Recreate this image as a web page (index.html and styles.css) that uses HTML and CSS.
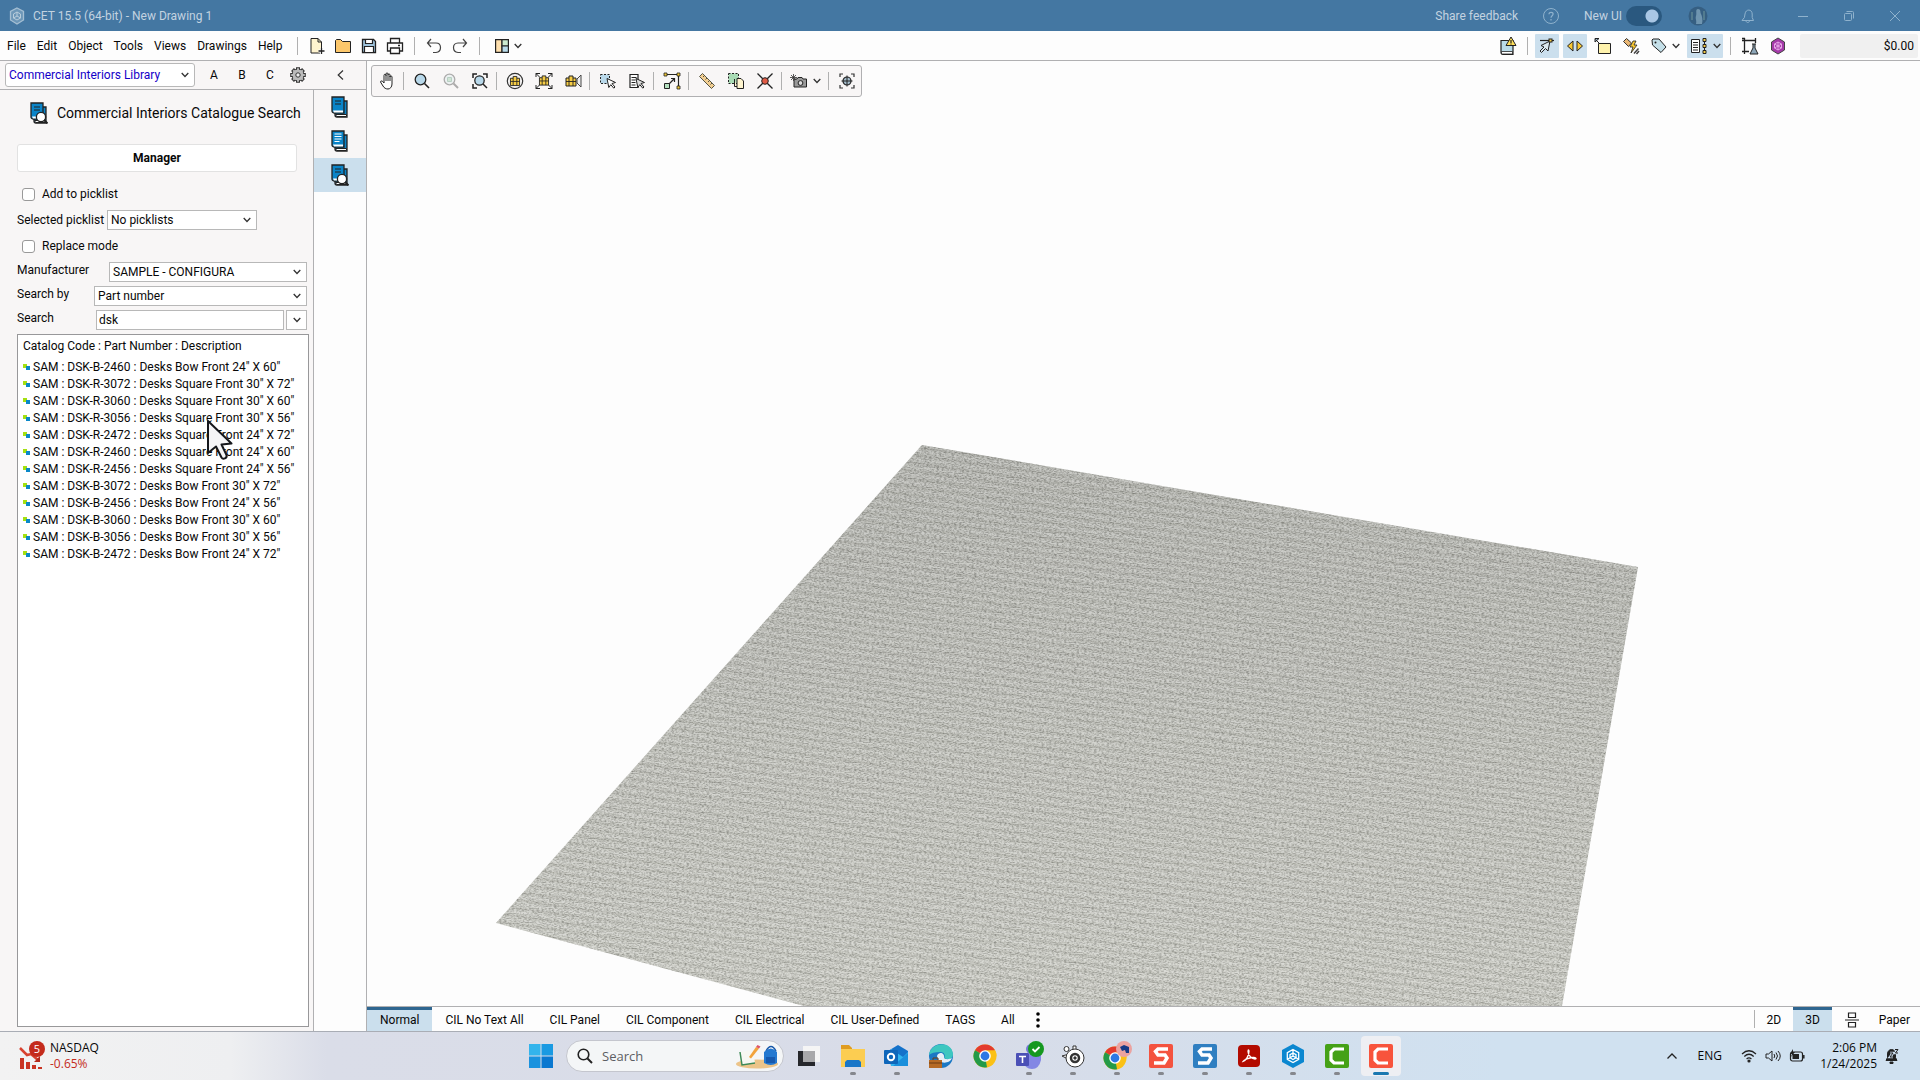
FILE: index.html
```html
<!DOCTYPE html>
<html lang="en">
<head>
<meta charset="utf-8">
<title>CET 15.5 (64-bit) - New Drawing 1</title>
<link rel="stylesheet" href="styles.css">
</head>
<body>
<svg class="defs" aria-hidden="true">
  <symbol id="book" viewBox="0 0 18 22"><path d="M4 5h12v16H6a2 2 0 0 1-2-2z" fill="#0a84c8" stroke="#222" stroke-width="1.3"/><path d="M4.500 18.500h11v2h-10z" fill="#fff" stroke="#222"/><path d="M1 1h12v16H3a2 2 0 0 1-2-2z" fill="#0a84c8" stroke="#222" stroke-width="1.300"/><path d="M2 14.500h10v2H3z" fill="#fff"/></symbol>
  <symbol id="glass" viewBox="0 0 18 22"><circle cx="11" cy="15" r="4.600" fill="#fff" stroke="#222" stroke-width="1.300"/><path d="M14 18l3.500 3.500" stroke="#222" stroke-width="2"/></symbol>
  <symbol id="chev" viewBox="0 0 8 6"><path d="M.7 1l3.300 3.500L7.300 1" fill="none" stroke="#333" stroke-width="1.300"/></symbol>
  <symbol id="part" viewBox="0 0 8 8"><path d="M0 1h4v4H0z" fill="#a5e010" shape-rendering="crispEdges"/><path d="M3 3h4v4H3z" fill="#0a88c8" shape-rendering="crispEdges"/></symbol>
  <symbol id="chrome" viewBox="0 0 24 24"><circle cx="12" cy="12" r="11.500" fill="#fbc116"/><path d="M12 12L2 6.300A11.500 11.500 0 0 1 22 6.300z" fill="#e33b2e"/><path d="M12 12l2 11.300A11.500 11.500 0 0 1 2 6.300z" fill="#239a48"/><path d="M22 6.300H12v6h11.500a11.500 11.500 0 0 0-1.500-6z" fill="#fbc116"/><circle cx="12" cy="12" r="5.800" fill="#fff"/><circle cx="12" cy="12" r="4.400" fill="#2d78e4"/></symbol>
  <symbol id="cube" viewBox="0 0 24 24"><path d="M12 5.500l5.700 3.200v6.600L12 18.500l-5.700-3.200V8.700zM12 5.500V12m0 0l5.700 3.300M12 12l-5.700 3.300M12 9l-3 1.700v3L12 15.500l3-1.800v-3z" fill="none" stroke="currentColor" stroke-width="1.300"/></symbol>
  <symbol id="cabinet" viewBox="0 0 12 12"><path d="M1 3h3V1h4v2h3v8H1z" fill="#f7cd45" stroke="#222"/><path d="M4 3v8M8 3v8M1 6.500h10" stroke="#222" stroke-width=".9"/></symbol>
</svg>

<header class="titlebar">
  <svg class="app-logo" width="16" height="18" viewBox="0 0 16 18"><path d="M8 1l6.500 3.500v8.500L8 17l-6.500-4V4.500z" fill="#6d97b8" stroke="#a5bfd3" stroke-width="1.300"/><path d="M8 5l3.500 2v4L8 13l-3.500-2V7zM8 5v4m0 0l3.500 2M8 9l-3.500 2" fill="none" stroke="#b8ccdb"/></svg>
  <span class="app-title">CET 15.5 (64-bit) - New Drawing 1</span>
  <button class="feedback">Share feedback</button>
  <button class="t-help" aria-label="Help"><svg width="16" height="16" viewBox="0 0 16 16" fill="none" stroke="#8fb2cd"><circle cx="8" cy="8" r="7.500"/><path d="M6 6.300c0-2.800 4.100-2.500 4.100-.2C10.100 7.800 8 7.800 8 9.800M8 11v1.500" stroke-width="1.200"/></svg></button>
  <label class="newui">New UI <input type="checkbox" role="switch" checked></label>
  <button class="t-avatar" aria-label="Account"><svg width="20" height="20" viewBox="0 0 20 20"><circle cx="10" cy="10" r="9.500" fill="#365f82"/><path d="M10 3c3 0 2 3 3 5s2 6 1 10H8c1-4-1-5 0-8s-1-7 2-7z" fill="#6f95b0"/><path d="M4 6v8M16 5v9" stroke="#527b8f" stroke-width="2"/></svg></button>
  <button class="t-bell" aria-label="Notifications"><svg width="14" height="16" viewBox="0 0 14 16" fill="none" stroke="#8fb2cd"><path d="M1 12.500h11.500l-1.300-3V6c0-5-6.500-5.500-7.200 0l-.6 3.500zM5 13c.5 2 3 2 3.500 0"/></svg></button>
  <button class="t-win" aria-label="Minimize"><svg width="12" height="12" viewBox="0 0 12 12" stroke="#8fb2cd"><path d="M1 6.500h10"/></svg></button>
  <button class="t-win" aria-label="Restore"><svg width="12" height="12" viewBox="0 0 12 12" fill="none" stroke="#8fb2cd"><rect x="1.500" y="3.500" width="7" height="7" rx="1"/><path d="M3.500 1.500h6a1 1 0 0 1 1 1v6"/></svg></button>
  <button class="t-win" aria-label="Close"><svg width="12" height="12" viewBox="0 0 12 12" stroke="#8fb2cd"><path d="M1 1l10 10M11 1L1 11"/></svg></button>
</header>

<div class="menubar">
  <nav class="menu">
    <button>File</button><button>Edit</button><button>Object</button><button>Tools</button><button>Views</button><button>Drawings</button><button>Help</button>
  </nav>
  <span class="sep"></span>
  <div class="tools">
    <button aria-label="New"><svg width="16" height="18" viewBox="0 0 16 18"><path d="M2 1.500h7l3.500 3.500v11H2z" fill="#fff4cf" stroke="#222"/><path d="M9 1.500V5h3.500" fill="none" stroke="#222"/><path d="M12.500 11v6M9.500 14h6" stroke="#fff" stroke-width="3"/><path d="M12.500 11v6M9.500 14h6" stroke="#222" stroke-width="1.300"/></svg></button>
    <button aria-label="Open"><svg width="18" height="16" viewBox="0 0 18 16"><path d="M1.500 2.500l1-1h4l2 2h8v11h-15z" fill="#fcc76b" stroke="#222"/></svg></button>
    <button aria-label="Save"><svg width="16" height="16" viewBox="0 0 16 16"><path d="M1.500 1.500h11l2 2v11h-13z" fill="#9ec3dc" stroke="#222" stroke-width="1.300"/><path d="M4.500 1.500h7v4h-7zM3.500 8.500h9v6h-9z" fill="#fff" stroke="#222" stroke-width="1.200"/></svg></button>
    <button aria-label="Print"><svg width="18" height="18" viewBox="0 0 18 18" fill="#fff" stroke="#222" stroke-width="1.300"><path d="M4.500 6V1.500h9V6"/><path d="M1.500 6h15v8h-15z"/><path d="M4.500 11h9v5.500h-9zM12 8.500h2"/></svg></button>
  </div>
  <span class="sep"></span>
  <div class="tools">
    <button aria-label="Undo"><svg width="16" height="16" viewBox="0 0 16 16" fill="none" stroke="#444" stroke-width="1.200"><path d="M5 1L1.500 5 5 9M2 5h8c6 0 6 9 0 9.500H7"/></svg></button>
    <button aria-label="Redo"><svg width="16" height="16" viewBox="0 0 16 16" fill="none" stroke="#444" stroke-width="1.200"><path d="M11 1l3.500 4L11 9M14 5H6c-6 0-6 9 0 9.500h3"/></svg></button>
  </div>
  <span class="sep"></span>
  <button class="wide" aria-label="Layout"><svg width="14" height="14" viewBox="0 0 14 14" stroke="#222" stroke-width="1.200"><path d="M.6.6h6.400v12.800H.6z" fill="#ffe0ae"/><path d="M7 .6h6.400V7H7z" fill="#cdebd0"/><path d="M7 7h6.400v6.400H7z" fill="#b9dceb"/></svg><svg width="8" height="6"><use href="#chev"/></svg></button>

  <div class="rtools">
    <button aria-label="Alerts"><svg width="18" height="20" viewBox="0 0 18 20"><path d="M2 4.500h12v14H4a2 2 0 0 1-2-2z" fill="#b9dbe9" stroke="#222" stroke-width="1.200"/><path d="M2.500 15.500h11v2.500h-11z" fill="#fff" stroke="#222" stroke-width=".8"/><path d="M12 1l5 8.500H7z" fill="#ffe05a" stroke="#222"/><path d="M12 4v3M12 7.600v1" stroke="#222" stroke-width="1.200"/></svg></button>
    <span class="sep"></span>
    <button class="on" aria-label="Snap"><svg width="16" height="16" viewBox="0 0 16 16" fill="#dbe8ef" stroke="#222"><path d="M1 2.500h14" stroke-width="1.200"/><path d="M11 3L2 7.500l3 1.500-4 4 1.500 1.500 4-4L9 13z"/><rect x="10" y="1" width="3" height="3" fill="#f7cd45"/></svg></button>
    <button class="on" aria-label="Flip"><svg width="18" height="12" viewBox="0 0 18 12" fill="#f9c833" stroke="#222"><path d="M7 1v10L1.500 6zM11 1v10l5.500-5z"/></svg></button>
    <button aria-label="Note"><svg width="18" height="18" viewBox="0 0 18 18"><path d="M4.500 6.500h12v10h-12z" fill="#fff3ad" stroke="#222"/><path d="M1.500 2.500L6 7M1 5V1.500h4z" fill="#9bbad0" stroke="#222"/></svg></button>
    <button aria-label="Connect"><svg width="18" height="18" viewBox="0 0 18 18"><path d="M1.500 4.500l3-3 5 4.500-3 3.500z" fill="#e9b774" stroke="#333"/><path d="M11 4l-3 6h3l-2 6 6-8h-3l2-4z" fill="#f9c833" stroke="#222" stroke-width=".8"/><path d="M12 16.500l4.500-5M14.500 17l2.500-3" stroke="#444" stroke-width="1.500"/></svg></button>
    <button class="wide" aria-label="Tags"><svg width="16" height="16" viewBox="0 0 16 16"><path d="M1 2l1-1h6l7 8-5 5.500L1.500 7z" fill="#c4dfe8" stroke="#222"/><circle cx="4.500" cy="4.500" r="1" fill="#222"/></svg><svg width="8" height="6"><use href="#chev"/></svg></button>
    <button class="wide on" aria-label="Lists"><svg width="18" height="16" viewBox="0 0 18 16"><path d="M1.500 1.500h8v13h-8z" fill="#fff" stroke="#222"/><path d="M3 4.500h5M3 7h5M3 9.500h5M3 12h5" stroke="#222" stroke-width="1.200"/><path d="M14.500 1v14" stroke="#222"/><path d="M13 .5h3v3h-3zM13 6.500h3v3h-3zM13 12.500h3v3h-3z" fill="#f7cd45" stroke="#222"/></svg><svg width="8" height="6"><use href="#chev"/></svg></button>
    <span class="sep"></span>
    <button aria-label="Lab"><svg width="18" height="18" viewBox="0 0 18 18" fill="none" stroke="#222"><path d="M3.500 1v16M1 3.500h14M1 14.500h7M1 1.500h3M14.500 1v5" stroke-width="1.300"/><path d="M11 7h4M12 7v4l-3 6h8l-3-6V7" fill="#8ca6b8"/></svg></button>
    <button aria-label="Hexagon"><svg width="16" height="18" viewBox="0 0 16 18"><path d="M8 1l6.500 4v8L8 17l-6.500-4V5z" fill="#a43aa8" stroke="#444"/><path d="M8 5l3.500 2v4L8 13l-3.500-2V7zM8 5v8M4.500 7l7 4M11.500 7l-7 4" fill="none" stroke="#e7a5e8"/></svg></button>
    <output class="price">$0.00</output>
  </div>
</div>

<main class="work">
  <aside class="side">
    <div class="side-head">
      <select class="lib" aria-label="Library"><option>Commercial Interiors Library</option></select>
      <button>A</button><button>B</button><button>C</button>
      <button aria-label="Settings"><svg width="18" height="18" viewBox="0 0 18 18"><path d="M9 1.200v15.600M1.200 9h15.600M3.500 3.500l11 11M14.500 3.500l-11 11" stroke="#333" stroke-width="4"/><circle cx="9" cy="9" r="6" fill="#bbb" stroke="#333"/><path d="M9 2.200v13.600M2.200 9h13.600M4.200 4.200l9.600 9.600M13.800 4.200l-9.600 9.600" stroke="#bbb" stroke-width="2"/><circle cx="9" cy="9" r="2.200" fill="#eee" stroke="#333"/></svg></button>
      <button class="collapse" aria-label="Collapse"><svg width="7" height="10" viewBox="0 0 7 10"><path d="M6 .5L1.200 5 6 9.500" fill="none" stroke="#333" stroke-width="1.200"/></svg></button>
    </div>
    <div class="side-body">
      <section class="panel">
        <h1><svg width="18" height="22"><use href="#book"/><path d="M4 5h6M4 8h6" stroke="#222"/><use href="#glass"/></svg>Commercial Interiors Catalogue Search</h1>
        <button class="manager">Manager</button>
        <label class="check"><input type="checkbox">Add to picklist</label>
        <div class="field pick"><label for="pick">Selected picklist</label><select id="pick"><option>No picklists</option></select></div>
        <label class="check"><input type="checkbox">Replace mode</label>
        <div class="field"><label class="l-man" for="man">Manufacturer</label><select id="man"><option>SAMPLE - CONFIGURA</option></select></div>
        <div class="field"><label class="l-by" for="by">Search by</label><select id="by"><option>Part number</option></select></div>
        <div class="field"><label class="l-s" for="q">Search</label><input id="q" type="text" value="dsk"><button class="drop" aria-label="History"><svg width="8" height="6"><use href="#chev"/></svg></button></div>
        <div class="results">
          <h2>Catalog Code : Part Number : Description</h2>
          <ul>
            <li><svg width="8" height="8"><use href="#part"/></svg>SAM : DSK-B-2460 : Desks Bow Front 24" X 60"</li>
            <li><svg width="8" height="8"><use href="#part"/></svg>SAM : DSK-R-3072 : Desks Square Front 30" X 72"</li>
            <li><svg width="8" height="8"><use href="#part"/></svg>SAM : DSK-R-3060 : Desks Square Front 30" X 60"</li>
            <li><svg width="8" height="8"><use href="#part"/></svg>SAM : DSK-R-3056 : Desks Square Front 30" X 56"</li>
            <li class="hover"><svg width="8" height="8"><use href="#part"/></svg>SAM : DSK-R-2472 : Desks Square Front 24" X 72"
              <svg class="cursor" width="28" height="42" viewBox="0 0 28 42"><path d="M3 2v32l8-6.500 5.500 11c1.500 2.500 6 .8 5-2.500L16.500 25.500l10-1z" fill="#f4f4f6" stroke="#15171c" stroke-width="2" stroke-linejoin="round"/></svg></li>
            <li><svg width="8" height="8"><use href="#part"/></svg>SAM : DSK-R-2460 : Desks Square Front 24" X 60"</li>
            <li><svg width="8" height="8"><use href="#part"/></svg>SAM : DSK-R-2456 : Desks Square Front 24" X 56"</li>
            <li><svg width="8" height="8"><use href="#part"/></svg>SAM : DSK-B-3072 : Desks Bow Front 30" X 72"</li>
            <li><svg width="8" height="8"><use href="#part"/></svg>SAM : DSK-B-2456 : Desks Bow Front 24" X 56"</li>
            <li><svg width="8" height="8"><use href="#part"/></svg>SAM : DSK-B-3060 : Desks Bow Front 30" X 60"</li>
            <li><svg width="8" height="8"><use href="#part"/></svg>SAM : DSK-B-3056 : Desks Bow Front 30" X 56"</li>
            <li><svg width="8" height="8"><use href="#part"/></svg>SAM : DSK-B-2472 : Desks Bow Front 24" X 72"</li>
          </ul>
        </div>
      </section>
      <nav class="strip">
        <button aria-label="Catalogue"><svg width="18" height="22"><use href="#book"/><path d="M4 5h6M4 8h6" stroke="#222"/></svg></button>
        <button aria-label="Lists"><svg width="18" height="22"><use href="#book"/><path d="M3.500 4h7M3.500 6.500h7M3.500 9h7M3.500 11.500h5" stroke="#fff"/></svg></button>
        <button class="on" aria-label="Search"><svg width="18" height="22"><use href="#book"/><path d="M4 5h6M4 8h6" stroke="#222"/><use href="#glass"/></svg></button>
      </nav>
    </div>
  </aside>

  <section class="stage">
    <div class="view">
      <svg class="scene" viewBox="0 0 1553 945" preserveAspectRatio="xMinYMin slice" aria-label="3D floor">
        <defs>
          <linearGradient id="shade" x1="0" y1="0" x2="0" y2="1"><stop offset="0" stop-color="#b0b1ac"/><stop offset=".5" stop-color="#bebfb9"/><stop offset="1" stop-color="#cacbc4"/></linearGradient>
          <pattern id="rib" width="60" height="8" patternUnits="userSpaceOnUse" patternTransform="rotate(8)"><path d="M0 2h60" stroke="#777870" stroke-opacity=".2" stroke-width="2"/><path d="M0 6h60" stroke="#fff" stroke-opacity=".12" stroke-width="2"/></pattern>
          <filter id="weave" color-interpolation-filters="sRGB" x="0" y="0" width="1" height="1"><feTurbulence type="fractalNoise" baseFrequency=".4 .8" numOctaves="2" seed="4"/><feColorMatrix values="2.200 0 0 0 -.38  2.200 0 0 0 -.38  2.200 0 0 0 -.4  0 0 0 0 .22"/><feComposite in2="SourceAlpha" operator="in"/></filter>
        </defs>
        <path d="M555 384L1271 506 1195 945H437L129 862z" fill="url(#shade)"/>
        <path d="M555 384L1271 506 1195 945H437L129 862z" fill="url(#rib)"/>
        <path d="M555 384L1271 506 1195 945H437L129 862z" filter="url(#weave)"/>
      </svg>
      <div class="viewbar" role="toolbar" aria-label="View">
        <button aria-label="Pan"><svg width="16" height="18" viewBox="0 0 16 18"><path d="M5 11V3.500c0-1.800 2-1.800 2 0V2c0-1.500 2-1.500 2 0v1c0-1.500 2-1.500 2 0v2c0-1.500 2-1.500 2 0v7c0 3-2 5-4 5s-4-1-5-3L1.500 10c0-1.500 2-1.500 3.500 1M7 3v6M9 3v6M11 4v5" fill="#fff" stroke="#222"/></svg></button>
        <span class="sep"></span>
        <button aria-label="Zoom"><svg width="16" height="16" viewBox="0 0 16 16"><circle cx="6.500" cy="6.500" r="5.300" fill="#b8d8ea" stroke="#222" stroke-width="1.300"/><path d="M10.500 10.500L15 15" stroke="#222" stroke-width="1.600"/></svg></button>
        <button aria-label="Zoom selection" disabled><svg width="16" height="16" viewBox="0 0 16 16" opacity=".35"><circle cx="6.500" cy="6.500" r="5.300" fill="#d8e8ea" stroke="#222" stroke-width="1.300"/><path d="M4.500 4.500h4v4h-4z" fill="#8ac49a" stroke="#486"/><path d="M10.500 10.500L15 15" stroke="#222" stroke-width="2"/></svg></button>
        <button aria-label="Zoom fit"><svg width="16" height="16" viewBox="0 0 16 16"><circle cx="7.500" cy="7.500" r="4.700" fill="#b8d8ea" stroke="#222" stroke-width="1.300"/><path d="M11 11l4 4M1 5V1h4M11 1h4v4M1 11v4h4" fill="none" stroke="#222" stroke-width="1.500"/></svg></button>
        <span class="sep"></span>
        <button aria-label="Orbit"><svg width="18" height="18" viewBox="0 0 18 18"><circle cx="9" cy="9" r="7.700" fill="none" stroke="#333" stroke-width="1.200"/><use href="#cabinet" x="3.500" y="3.500" width="11" height="11"/></svg></button>
        <button aria-label="Extents"><svg width="18" height="18" viewBox="0 0 18 18"><path d="M1 5V1.500h4M13 1.500h4V5M1 13v3.500h4M13 16.500h4V13M1 1.500l4 4M17 1.500l-4 4M1 16.500l4-4M17 16.500l-4-4" fill="none" stroke="#222"/><use href="#cabinet" x="3.500" y="3" width="11" height="11"/></svg></button>
        <button aria-label="Walk"><svg width="18" height="16" viewBox="0 0 18 16"><use href="#cabinet" x="1" y="2" width="12" height="12"/><path d="M17 2v12l-4-4V6z" fill="#eee" stroke="#444"/></svg></button>
        <span class="sep"></span>
        <button aria-label="Select"><svg width="18" height="16" viewBox="0 0 18 16"><path d="M1.500 1.500h9v9h-9z" fill="#b8d8ea" stroke="#222" stroke-dasharray="2 1.500"/><path d="M8 5.500l8.500 4-3.500 1 3 3.500-1.200 1.200-3-3.500-2 2.800z" fill="#fff" stroke="#222"/></svg></button>
        <button aria-label="Select list"><svg width="18" height="16" viewBox="0 0 18 16"><path d="M2 1.500h8v13H2z" fill="#fff" stroke="#222" stroke-width="1.200"/><path d="M3.500 4.500h5M3.500 7h4M3.500 9.500h4M3.500 12h4" stroke="#222"/><path d="M8 5.500l8.500 4-3.500 1 3 3.500-1.200 1.200-3-3.500-2 2.800z" fill="#ddd" stroke="#222"/></svg></button>
        <span class="sep"></span>
        <button aria-label="Stretch"><svg width="18" height="18" viewBox="0 0 18 18"><path d="M2 2.500h13.500V16M6 12l5-5M8 6.500h3.500V10" fill="none" stroke="#222" stroke-width="1.200"/><path d="M1.500 11.500h5v5h-5z" fill="#b4e0bf" stroke="#222"/><path d="M1 1h3v3H1zM14 1h3v3h-3zM14 14h3v3h-3z" fill="#f0c838" stroke="#222" stroke-width=".8"/></svg></button>
        <span class="sep"></span>
        <button aria-label="Measure"><svg width="18" height="18" viewBox="0 0 18 18"><path d="M1.500 4.500l3-3 12 12-3 3z" fill="#f3cf93" stroke="#554"/><path d="M6.500 3.500L5 5M9 6L7.500 7.500M11.500 8.500L10 10M14 11l-1.500 1.500" stroke="#554"/></svg></button>
        <button aria-label="Copy"><svg width="18" height="18" viewBox="0 0 18 18"><path d="M1.500 1.500h10v10h-10z" fill="#a9dcb5" stroke="#222" stroke-dasharray="2 1.500"/><path d="M7.500 7v7.500H10M10 6.500h4l2.500 2.500v7.500H10z" fill="#fff5cf" stroke="#222"/></svg></button>
        <button aria-label="Delete"><svg width="18" height="18" viewBox="0 0 18 18"><path d="M1.500 1.500l15 15M16.500 1.500l-15 15" stroke="#222" stroke-width="1.300"/><circle cx="9" cy="9" r="3.300" fill="#e05a44" stroke="#222"/></svg></button>
        <span class="sep"></span>
        <button class="wide" aria-label="Camera"><svg width="18" height="14" viewBox="0 0 18 14"><path d="M4 5h3l1-1.500h4L13 5h3.500v8H4z" fill="#999" stroke="#222"/><circle cx="10.500" cy="9" r="2.400" fill="#ddd" stroke="#222"/><path d="M3.500 0v7M0 3.500h7M1 1l5 5M6 1L1 6" stroke="#333" stroke-width=".8"/></svg><svg width="8" height="6"><use href="#chev"/></svg></button>
        <span class="sep"></span>
        <button aria-label="Center"><svg width="16" height="16" viewBox="0 0 16 16"><path d="M1 4V1h3M12 1h3v3M1 12v3h3M12 15h3v-3" fill="none" stroke="#333" stroke-width="1.200"/><circle cx="8" cy="8" r="4" fill="#a4bccb" stroke="#222" stroke-width="1.200"/><path d="M8 2.500v11M2.500 8h11" stroke="#222"/></svg></button>
      </div>
    </div>
    <footer class="tabs">
      <button class="on">Normal</button><button>CIL No Text All</button><button>CIL Panel</button><button>CIL Component</button><button>CIL Electrical</button><button>CIL User-Defined</button><button>TAGS</button><button>All</button>
      <button class="more" aria-label="More"><svg width="4" height="16" viewBox="0 0 4 16"><circle cx="2" cy="2" r="1.800"/><circle cx="2" cy="8" r="1.800"/><circle cx="2" cy="14" r="1.800"/></svg></button>
      <div class="modes"><span class="sep"></span><button>2D</button><button class="on">3D</button><button aria-label="Split"><svg width="16" height="16" viewBox="0 0 16 16" fill="none" stroke="#222" stroke-width="1.200"><path d="M4.500 1h7v4.500h-7zM4.500 10.500h7V15h-7zM1 8h14"/></svg></button><button>Paper</button></div>
    </footer>
  </section>
</main>

<div class="taskbar">
  <button class="widget">
    <svg width="28" height="30" viewBox="0 0 28 30"><path d="M1 7l7 7 4-1 7 6" fill="none" stroke="#d8422f" stroke-width="2.500"/><path d="M15 21h6v-6z" fill="#b52a1c"/><path d="M1 17h4v11H1zM7 21h4v7H7zM13 24h4v4h-4zM19 26h4v2h-4z" fill="#c93423"/><circle cx="18" cy="8" r="8" fill="#c42b1c"/><text x="18" y="12" text-anchor="middle" class="badge-n">5</text></svg>
    <span class="quote">NASDAQ<em>-0.65%</em></span>
  </button>
  <nav class="apps">
    <button aria-label="Start"><svg width="24" height="24" viewBox="0 0 24 24"><path d="M0 0h11.500v11.500H0z" fill="#33b4ec"/><path d="M12.500 0H24v11.500H12.500z" fill="#1a9ae2"/><path d="M0 12.500h11.500V24H0z" fill="#1a92de"/><path d="M12.500 12.500H24V24H12.500z" fill="#0a78d0"/></svg></button>
    <label class="find">
      <svg width="16" height="16" viewBox="0 0 16 16" fill="none" stroke="#222"><circle cx="6.500" cy="6.500" r="5.300" stroke-width="1.600"/><path d="M10.500 10.500l4.500 4.500" stroke-width="2"/></svg>
      <input type="search" placeholder="Search" aria-label="Search">
      <svg width="44" height="26" viewBox="0 0 44 26"><ellipse cx="22" cy="21" rx="21" ry="4.500" fill="#ecc489"/><path d="M5 9l13-2 2 13-13 2z" fill="#f7f7f2"/><path d="M5 9l2 13 13-2" fill="none" stroke="#3e8a58" stroke-width="1.500"/><path d="M14 14l7-10 3 1.500-8 10z" fill="#f2a33c"/><path d="M21 4l1.500-2 3 1.500L24 5.500z" fill="#df5568"/><path d="M31 8q5-9 10 0" fill="none" stroke="#1657a8" stroke-width="1.500"/><path d="M29 9q7-7 13 0v11q-6 4-13 0z" fill="#2378d0"/><path d="M31 14h9v6h-9z" fill="#1659ae"/></svg>
    </label>
    <button aria-label="Task view"><svg width="24" height="24" viewBox="0 0 24 24"><path d="M6 2h17v16H6z" fill="#f5f5f5"/><path d="M1 7h17v15H1z" fill="#26272b"/><path d="M6 7h12v11H6z" fill="#a8a8aa"/></svg></button>
    <button class="run" aria-label="Explorer"><svg width="24" height="24" viewBox="0 0 24 24"><path d="M0 1h8l3 3v6H0z" fill="#e09c20"/><path d="M0 5h24v18H0z" fill="#fccd51"/><path d="M4 23v-5l2-2h12l2 2v5z" fill="#1976c8"/></svg></button>
    <button class="run" aria-label="Outlook"><svg width="26" height="24" viewBox="0 0 26 24"><path d="M4 7l10-6 10 6v15H7z" fill="#1472ca"/><path d="M7 5l12 8 5-5v14H7z" fill="#31b5ef"/><path d="M24 9L9 22h15z" fill="#1a8fdc"/><rect y="6" width="14" height="14" rx="1" fill="#0e66ba"/><circle cx="7" cy="13" r="3.200" fill="none" stroke="#fff" stroke-width="2"/></svg></button>
    <button aria-label="Edge"><svg width="24" height="24" viewBox="0 0 24 24"><circle cx="12" cy="12" r="12" fill="#1b78c4"/><path d="M0 11C2-3 23-3 24 10c0 6-6 6-9 4 2-3 0-6-4-6-5 0-9 1-11 3z" fill="#3ec7c0"/><path d="M8 12c2-5 8-3 7 2 2 2 6 1 8 0-2 6-14 7-15-2z" fill="#e5eef6"/><path d="M0 16h13v8H0z" fill="#b66a25"/><path d="M4 16v-2h5v2M0 19h13" fill="none" stroke="#6d3a12"/></svg></button>
    <button aria-label="Chrome"><svg width="24" height="24"><use href="#chrome"/></svg></button>
    <button class="run" aria-label="Teams"><svg width="30" height="30" viewBox="0 0 30 30"><circle cx="17" cy="8" r="5" fill="#7479d8"/><path d="M9 13h18v6q-2 9-9 9t-9-8z" fill="#8387e4"/><rect x="2" y="12" width="13" height="13" rx="1" fill="#4b50b6"/><path d="M5 15.500h7M8.500 15.500V22" stroke="#fff" stroke-width="1.600"/><circle cx="22" cy="8" r="8" fill="#15981f"/><path d="M18.500 8l2.500 2.500L25.500 6" fill="none" stroke="#fff" stroke-width="1.800"/></svg></button>
    <button class="run" aria-label="SteelSeries"><svg width="24" height="24" viewBox="0 0 24 24" fill="#fff" stroke="#333"><path d="M1 12l7-2 1 6z"/><circle cx="5.500" cy="5" r="2.500"/><path d="M12 6V2h3v3"/><circle cx="14" cy="14" r="9"/><circle cx="14" cy="14" r="4" stroke-width="2.500"/><circle cx="14" cy="14" r="1.200" fill="#333"/></svg></button>
    <button class="run" aria-label="Chrome profile"><svg width="30" height="30" viewBox="0 0 30 30"><use href="#chrome" x="1" y="5" width="24" height="24"/><circle cx="22" cy="8" r="8" fill="#eba3a0"/><path d="M18 6l4-2 5 2v6h-3l-1-3-3 1z" fill="#153a86"/></svg></button>
    <button class="run" aria-label="Snagit"><svg width="24" height="24" viewBox="0 0 24 24"><rect width="24" height="24" rx="2" fill="#f4533f"/><path d="M19 5H9L6.500 7.500 9 11h7l2 3-3 5H5" fill="none" stroke="#fff" stroke-width="3.500"/></svg></button>
    <button class="run" aria-label="Snagit editor"><svg width="24" height="24" viewBox="0 0 24 24"><rect width="24" height="24" rx="2" fill="#2f7fc1"/><path d="M19 5H9L6.500 7.500 9 11h7l2 3-3 5H5" fill="none" stroke="#fff" stroke-width="3.500"/></svg></button>
    <button class="run" aria-label="Acrobat"><svg width="22" height="22" viewBox="0 0 22 22"><rect width="22" height="22" rx="4" fill="#b30b00"/><path d="M5 16.500c3-1 6-6 6-10 0-2-1-2-1 0 0 4 4 7.500 7 7.500 2 0 1-1.700-2-1.500-4 .200-9 2-10 4z" fill="none" stroke="#fff" stroke-width="1.300"/></svg></button>
    <button class="run" aria-label="CET"><svg class="cet" width="24" height="24" viewBox="0 0 24 24"><path d="M12 0l11 6v12l-11 6-11-6V6z" fill="#0b87d0"/><use href="#cube"/></svg></button>
    <button class="run" aria-label="Camtasia"><svg width="24" height="24" viewBox="0 0 24 24"><rect width="24" height="24" rx="2" fill="#45a116"/><path d="M19 5H9L6 8v8l3 3h10" fill="none" stroke="#fff" stroke-width="3.200"/></svg></button>
    <button class="run active" aria-label="Camtasia recorder"><svg width="24" height="24" viewBox="0 0 24 24"><rect width="24" height="24" rx="2" fill="#f8543c"/><path d="M19 5H9L6 8v8l3 3h10" fill="none" stroke="#fff" stroke-width="3.200"/></svg></button>
  </nav>
  <div class="tray">
    <svg width="10" height="6" viewBox="0 0 10 6"><path d="M.5 5.500L5 1l4.500 4.500" fill="none" stroke="#222" stroke-width="1.300"/></svg>
    <span class="lang">ENG</span>
    <svg width="16" height="14" viewBox="0 0 16 14" fill="none" stroke="#222" stroke-width="1.200"><path d="M1 5q7-6.500 14 0M3.300 7.500q4.700-4.500 9.400 0M5.600 10q2.400-2.300 4.800 0"/><circle cx="8" cy="12" r="1" fill="#222"/></svg>
    <svg width="16" height="14" viewBox="0 0 16 14" fill="none" stroke="#222"><path d="M1 5h2.500L7 2v10L3.500 9H1zM9 5q1.500 2 0 4M11 3.500q3 3.500 0 7M13 2q4.500 5 0 10"/></svg>
    <svg width="16" height="14" viewBox="0 0 16 14"><rect x="1.500" y="3" width="12" height="9" rx="2" fill="none" stroke="#222" stroke-width="1.200"/><path d="M14.800 6v3.500" stroke="#222" stroke-width="1.500"/><path d="M3.500 5H10v5H3.500z" fill="#222"/><path d="M4 0L1 5h2L2 8l4-5H4z" fill="#222"/></svg>
    <time class="clock">2:06 PM<br>1/24/2025</time>
    <svg width="14" height="16" viewBox="0 0 14 16"><path d="M1 12.500h11l-1.500-3V6C10.500 0 2.500 0 2.500 6v3.500zM5 14h3v1.500H5z" fill="#222" stroke="#222"/><path d="M5 5h3L5 9h3M10 1.500h3L10.500 5H13" fill="none" stroke="#cfe0f1" stroke-width="2.500"/><path d="M5 5h3L5 9h3M10 1.500h3L10.500 5H13" fill="none" stroke="#222"/></svg>
  </div>
</div>
</body>
</html>
```
FILE: styles.css
```css
* { box-sizing: border-box; }

body {
  margin: 0;
  min-height: 100vh;
  display: grid;
  grid-template-rows: 31px 30px 1fr 48px;
  font: 12px/16px Roboto, "Open Sans", sans-serif;
  color: #080808;
  background: #fdfdfd;
}

button, input, select, output { font: inherit; color: inherit; }
button { border: 0; padding: 0; background: none; display: flex; align-items: center; justify-content: center; }
svg { display: block; flex: none; }
.defs { position: absolute; width: 0; height: 0; }
.sep { width: 1px; height: 18px; background: #b0b0b0; flex: none; }
.on { background: #cbdfed; }

/* title bar */
.titlebar { display: flex; align-items: center; background: #4477a2; color: #c3d3e0; padding: 0 2px 0 9px; }
.app-title { margin-left: 8px; margin-right: auto; }
.t-help { width: 66px; }
.newui { display: flex; align-items: center; gap: 4px; }
.newui input { appearance: none; width: 36px; height: 20px; margin: 0; border-radius: 10px; background: radial-gradient(circle at 26px 10px, #a9c6e4 6px, #2a587f 7px); }
.t-avatar { width: 72px; }
.t-bell { width: 28px; margin-right: 18px; }
.t-win { width: 46px; height: 31px; }

/* menu bar */
.menubar { display: flex; align-items: center; border-bottom: 1px solid #b0b0b2; padding: 0 2px 0 7px; }
.menu { display: flex; gap: 11px; margin-right: 15px; }
.tools { display: flex; padding: 0 6px; }
.tools button { width: 26px; height: 24px; }
.wide { width: 36px; height: 24px; gap: 5px; }
.menubar > .wide { margin-left: 10px; }
.rtools { display: flex; align-items: center; margin-left: auto; }
.rtools button { width: 24px; height: 24px; margin: 0 2px; border-radius: 1px; }
.rtools .wide { width: 36px; }
.rtools .sep { margin: 0 5px; }
.price { width: 118px; height: 24px; margin-left: 8px; padding: 4px; text-align: right; background: #f0f0f0; border-radius: 2px; }

/* left side */
.work { display: grid; grid-template-columns: 367px 1fr; border-bottom: 1px solid #a9adb5; }
.side { display: flex; flex-direction: column; border-right: 1px solid #b0b0b2; background: #f8f6f6; }
.side-head { display: flex; align-items: center; height: 29px; padding-left: 5px; border-bottom: 1px solid #b0b0b2; }
.side-head button { width: 28px; height: 24px; }
.lib + button { margin-left: 5px; }
.side-head .collapse { margin-left: 14px; }
.side-body { flex: 1; display: flex; }
.panel { flex: 1; min-width: 0; display: flex; flex-direction: column; padding: 0 4px 4px 17px; border-right: 1px solid #b0b0b2; }

select {
  appearance: none;
  border: 1px solid #b8b8b8;
  border-radius: 0;
  padding: 0 18px 0 3px;
  background: #fff url("data:image/svg+xml,%3Csvg xmlns='http://www.w3.org/2000/svg' width='8' height='6'%3E%3Cpath d='M.7 1L4 4.500 7.300 1' fill='none' stroke='%23333' stroke-width='1.300'/%3E%3C/svg%3E") no-repeat right 5px center;
}
.lib { width: 190px; height: 24px; border-radius: 3px; color: #1400c8; }

h1 { display: flex; align-items: center; gap: 9px; margin: 10px 0 19px; padding-left: 13px; height: 25px; font-size: 14px; font-weight: 400; white-space: nowrap; }
.manager { height: 28px; margin-right: 12px; border: 1px solid #e2e2e2; border-radius: 3px; background: #fff; font-weight: 700; }
.check { display: flex; align-items: center; gap: 7px; height: 26px; padding-left: 5px; }
.manager + .check { margin-top: 9px; }
.check input { appearance: none; width: 13px; height: 13px; margin: 0; border: 1px solid #999; border-radius: 3px; background: #fff; }
.field { display: flex; gap: 2px; height: 24px; padding-right: 2px; white-space: nowrap; }
.field label { flex: none; }
.field select, .field input { flex: 1; min-width: 0; height: 20px; }
.field input { border: 1px solid #b8b8b8; background: #fff; padding: 0 2px; }
.pick { height: 26px; align-items: center; }
.pick label { width: 88px; }
.field.pick select { flex: none; width: 150px; }
.check + .field:not(.pick) { margin-top: 3px; }
.l-man { width: 90px; }
.l-by { width: 75px; }
.l-s { width: 77px; }
.drop { width: 21px; height: 20px; border: 1px solid #b8b8b8; background: #fff; }
.results { flex: 1; border: 1px solid #98989a; background: #fff; padding: 3px 5px; }
h2 { margin: 0 0 3px; font-size: 12px; line-height: 17px; font-weight: 400; }
ul { margin: 0; padding: 0; list-style: none; }
li { display: flex; align-items: center; gap: 2px; height: 17px; white-space: nowrap; }
.hover { position: relative; }
.cursor { position: absolute; left: 182px; top: -7px; z-index: 1; }
.strip { width: 52px; background: linear-gradient(#f8f6f6 102px, #fdfdfd 102px); }
.strip button { width: 100%; height: 34px; }

/* drawing area */
.stage { display: flex; flex-direction: column; min-width: 0; }
.view { flex: 1; position: relative; overflow: hidden; }
.scene { position: absolute; inset: 0; width: 100%; height: 100%; }
.viewbar { position: absolute; left: 4px; top: 4px; display: flex; align-items: center; height: 32px; border: 1px solid #b0b0b2; border-radius: 3px; background: #f8f6f6; }
.viewbar button { width: 29px; height: 28px; }
.viewbar .sep { margin: 0 3px 0 2px; }
.viewbar .wide { width: 41px; }
.tabs { display: flex; height: 25px; border-top: 1px solid #b0b0b2; }
.tabs button { padding: 0 13px 2px; border-top: 3px solid transparent; }
.tabs button.on { border-top-color: #2f6690; }
.tabs .more { padding: 0 8px 2px; }
.modes { display: flex; align-items: center; margin-left: auto; }
.modes button { height: 24px; padding: 0 12px 2px; }
.modes button:last-child { padding: 0 10px 2px 7px; }

/* taskbar */
.taskbar { font-family: "Open Sans", "Noto Sans", sans-serif; display: grid; grid-template-columns: 1fr auto 1fr; align-items: center; background: linear-gradient(90deg, #f2f2f2 0, #eeeff1 12%, #dadde8 17%, #d8dce8 50%, #d0e1f0 78%); }
.widget { justify-content: flex-start; gap: 3px; padding-left: 19px; text-align: left; }
.badge-n { fill: #fff; font-size: 11px; }
.quote em { display: block; font-style: normal; color: #c42b1c; }
.apps { display: flex; align-items: center; padding-left: 2px; }
.apps button { width: 40px; height: 40px; margin: 0 2px; border-radius: 4px; position: relative; }
.run::after { content: ""; position: absolute; bottom: 1px; width: 6px; height: 3px; border-radius: 2px; background: #85878d; }
.active { background: #eeeff3; }
.active::after { width: 16px; background: #1a78b0; }
.cet { color: #fff; }
.find { display: flex; align-items: center; width: 218px; height: 32px; margin: 0 3px; padding: 0 4px 0 10px; border: 1px solid #c4c6ce; border-radius: 16px; background: #f4f6f7; gap: 9px; }
.find input { flex: 1; min-width: 0; border: 0; background: none; padding: 0; font-size: 13px; outline: 0; }
.find input::placeholder { color: #5c5e63; opacity: 1; }
.tray { display: flex; align-items: center; justify-content: flex-end; gap: 8px; padding-right: 21px; }
.lang { margin: 0 11px 0 13px; }
.clock { width: 64px; text-align: right; }
```
